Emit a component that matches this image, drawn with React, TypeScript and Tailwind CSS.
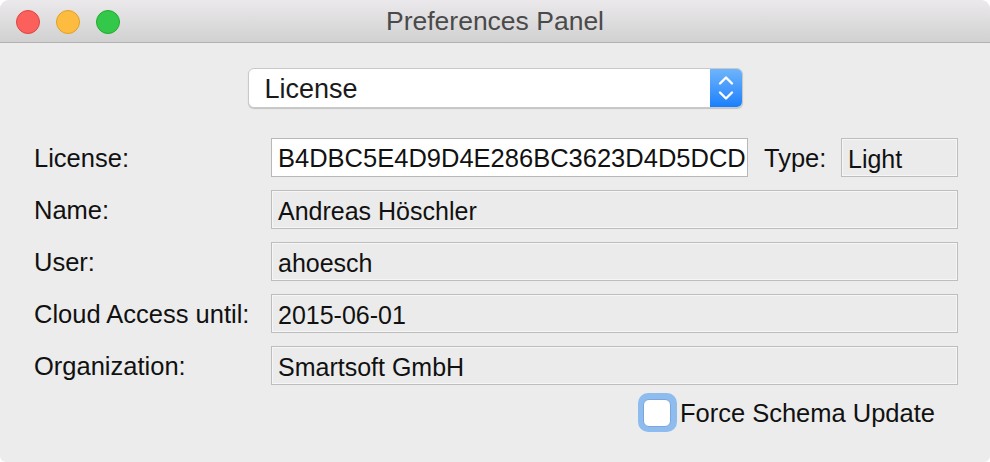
import React from 'react';

const font = { fontFamily: '"Liberation Sans", Arial, sans-serif' };

const rows = [
  { label: 'Name:', value: 'Andreas Höschler' },
  { label: 'User:', value: 'ahoesch' },
  { label: 'Cloud Access until:', value: '2015-06-01' },
  { label: 'Organization:', value: 'Smartsoft GmbH' },
];

const ReadOnlyField = ({ value, className = '' }: { value: string; className?: string }) => (
  <div
    className={`h-[39px] flex items-center pl-[6px] pt-[3px] leading-none border border-[#bdbdbd] bg-[#ebebeb] shadow-[inset_0_0_0_1px_#f6f6f6] text-[25px] text-[#111] whitespace-nowrap ${className}`}
  >
    {value}
  </div>
);

export default function App() {
  return (
    <div className="w-[990px] h-[462px] bg-white" style={font}>
      <div className="w-full h-full flex flex-col bg-[#ececec] rounded-t-[9px] rounded-b-[6px] overflow-hidden">
        {/* Title bar */}
        <div className="relative h-[43px] shrink-0 flex items-center justify-center bg-gradient-to-b from-[#ebe9eb] to-[#d2d1d2] border-b border-[#b1b1b1]">
          <div className="absolute left-[16px] top-[10px] flex gap-[16px]">
            <span className="w-[24px] h-[24px] rounded-full bg-[#fc605c] border border-[#e0443e]" />
            <span className="w-[24px] h-[24px] rounded-full bg-[#fdbc40] border border-[#dea123]" />
            <span className="w-[24px] h-[24px] rounded-full bg-[#34c84a] border border-[#1dad2b]" />
          </div>
          <span className="text-[26.5px] text-[#4a4a4a] leading-none pt-[1px]">Preferences Panel</span>
        </div>

        {/* Popup */}
        <div className="flex justify-center pt-[25px]">
          <div className="w-[495px] h-[40px] flex rounded-[6px] bg-white border border-[#c9c9c9] shadow-[0_1px_1px_rgba(0,0,0,0.18)] overflow-hidden">
            <div className="flex-1 flex items-center pl-[16px] pt-[2px] leading-none text-[27px] text-[#1a1a1a]">License</div>
            <div className="w-[32px] flex items-center justify-center bg-gradient-to-b from-[#6db4fb] to-[#157ffb]">
              <svg width="16" height="26" viewBox="0 0 16 26" fill="none" stroke="white" strokeWidth="2.4" strokeLinecap="round" strokeLinejoin="round">
                <path d="M2 8.5 L8 2.5 L14 8.5" />
                <path d="M2 17.5 L8 23.5 L14 17.5" />
              </svg>
            </div>
          </div>
        </div>

        {/* Form */}
        <div className="pl-[34px] pr-[32px] pt-[30px] flex flex-col gap-[13px]">
          <div className="h-[39px] flex items-center">
            <div className="w-[237px] pt-[3px] leading-none text-[25.5px] text-[#111]">License:</div>
            <div className="w-[477px] h-[39px] flex items-center pl-[6px] pt-[3px] leading-none bg-white border border-[#b8b8b8] text-[25.5px] text-[#111] whitespace-nowrap overflow-hidden">
              B4DBC5E4D9D4E286BC3623D4D5DCD
            </div>
            <div className="w-[93px] pl-[16px] pt-[3px] leading-none text-[25.5px] text-[#111]">Type:</div>
            <ReadOnlyField value="Light" className="w-[117px]" />
          </div>
          {rows.map((r) => (
            <div key={r.label} className="h-[39px] flex items-center">
              <div className="w-[237px] pt-[3px] leading-none text-[25.5px] text-[#111] whitespace-nowrap">{r.label}</div>
              <ReadOnlyField value={r.value} className="flex-1" />
            </div>
          ))}
        </div>

        {/* Checkbox */}
        <div className="flex justify-end items-center pr-[55px] pt-[8px]">
          <div className="w-[39px] h-[39px] rounded-[10px] bg-[#8ebcef] flex items-center justify-center">
            <div className="w-[28px] h-[28px] rounded-[6px] bg-white border border-[#7aa6dc]" />
          </div>
          <span className="ml-[3px] pt-[2px] leading-none text-[25.5px] text-[#111]">Force Schema Update</span>
        </div>
      </div>
    </div>
  );
}
